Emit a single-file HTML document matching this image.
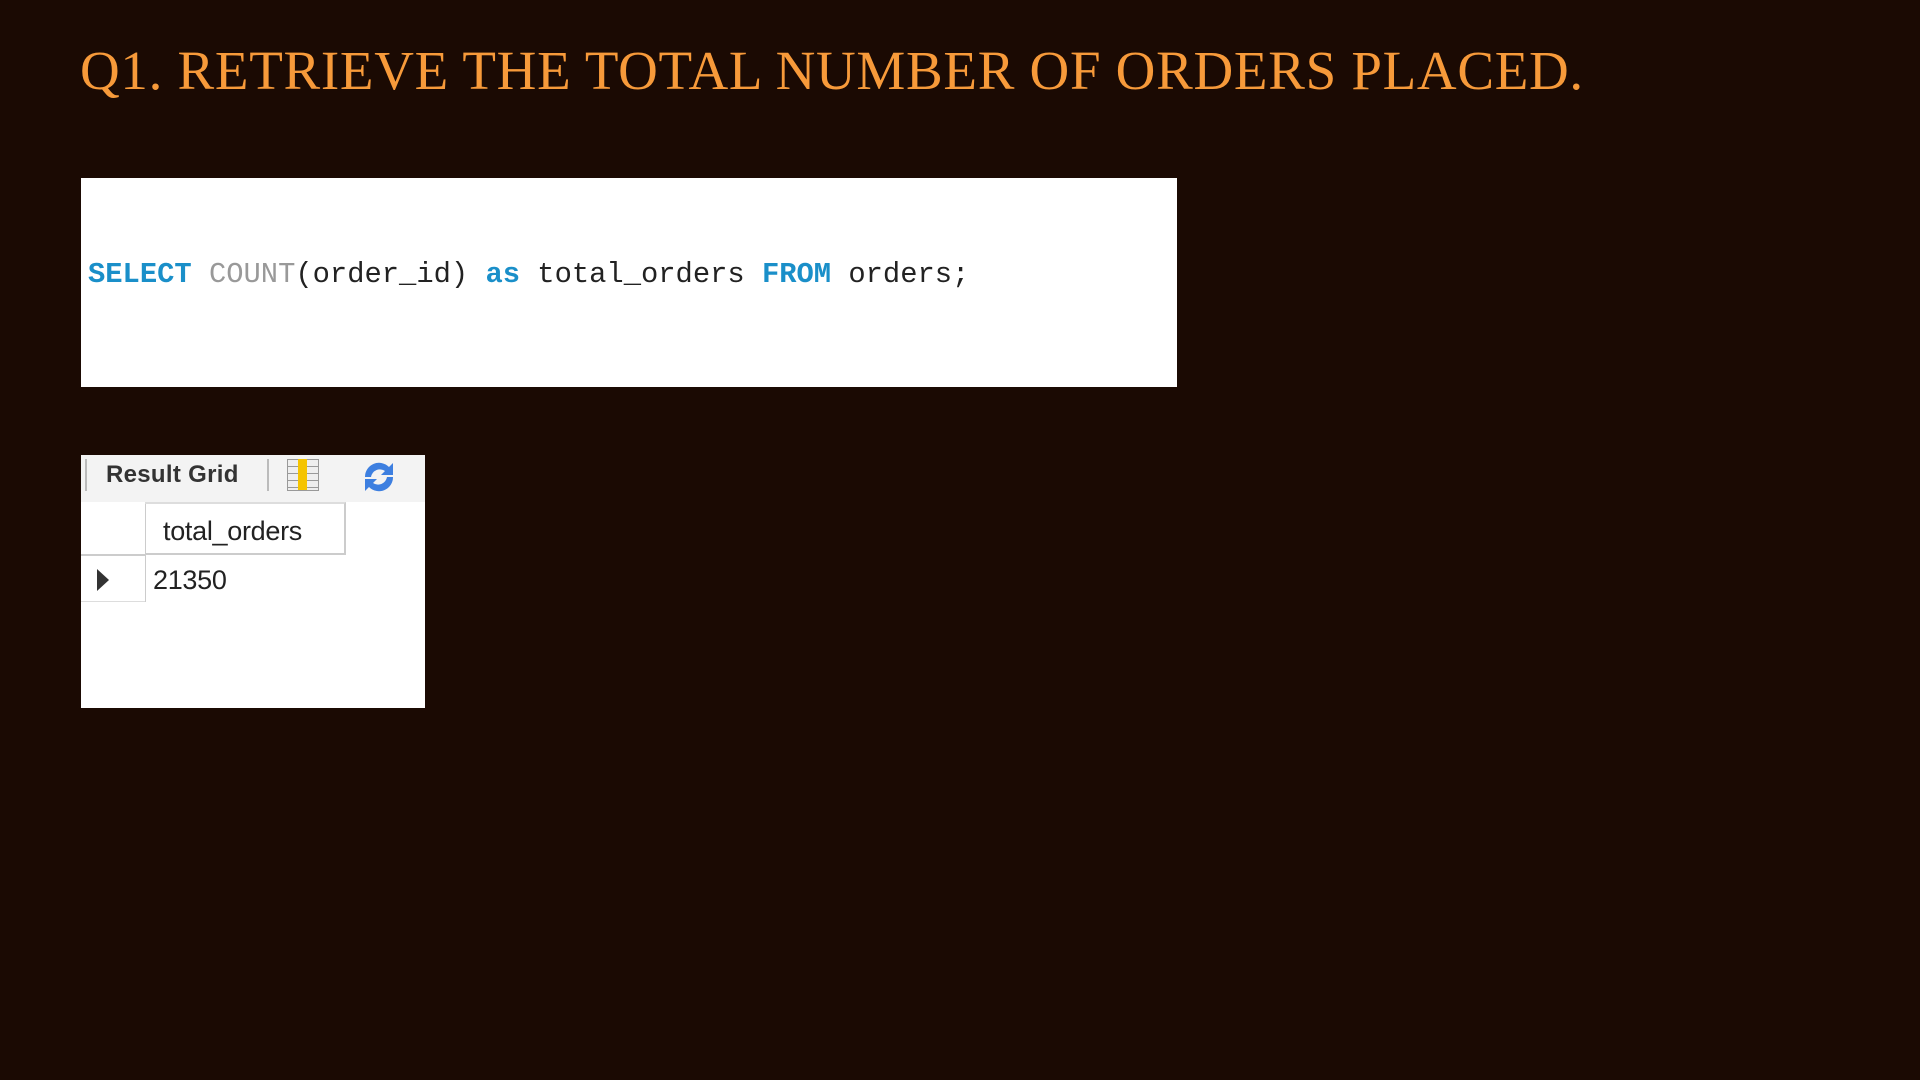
<!DOCTYPE html>
<html><head><style>
body{margin:0;width:1920px;height:1080px;background:#1b0a03;position:relative;overflow:hidden;font-family:"Liberation Sans",sans-serif}
.t{position:absolute;left:80px;top:39px;font-family:"Liberation Serif",serif;font-size:55px;color:#f79a3a;white-space:nowrap;letter-spacing:0.7px}
.code{position:absolute;left:81px;top:178px;width:1096px;height:209px;background:#fff}
.ct{position:absolute;left:88px;top:257px;font-family:"Liberation Mono",monospace;font-size:28.8px;color:#222;white-space:pre;line-height:36px}
.k{color:#1a8fc9;font-weight:bold}.f{color:#999}
.rg{position:absolute;left:81px;top:455px;width:344px;height:253px;background:#fff}
.tb{position:absolute;left:0;top:0;width:344px;height:47px;background:#f3f3f3}
</style></head><body>
<div class="t">Q1. RETRIEVE THE TOTAL NUMBER OF ORDERS PLACED.</div>
<div class="code"></div>
<div class="ct"><span class="k">SELECT</span> <span class="f">COUNT</span>(order_id) <span class="k">as</span> total_orders <span class="k">FROM</span> orders;</div>
<div class="rg">
 <div class="tb">
  <div style="position:absolute;left:4px;top:4px;width:2px;height:32px;background:#bbb"></div>
  <div style="position:absolute;left:25px;top:6px;font-weight:bold;font-size:24px;color:#333;letter-spacing:0.3px">Result Grid</div>
  <div style="position:absolute;left:186px;top:4px;width:2px;height:32px;background:#bbb"></div>
  <div style="position:absolute;left:206px;top:4px;width:30px;height:30px;border:1px solid #999;background:repeating-linear-gradient(#eee 0 6px,#999 6px 7px)"></div>
  <div style="position:absolute;left:217px;top:4px;width:9px;height:31px;background:#f5c400"></div>
  <svg style="position:absolute;left:278px;top:4px" width="40" height="36" viewBox="0 0 40 36"><path d="M6 18 A14 14 0 0 1 30 8 L34 4 L34 16 L22 16 L26 12 A9 9 0 0 0 12 18 Z" fill="#3d7fe0"/><path d="M34 18 A14 14 0 0 1 10 28 L6 32 L6 20 L18 20 L14 24 A9 9 0 0 0 28 18 Z" fill="#3d7fe0"/></svg>
 </div>
 <div style="position:absolute;left:64px;top:47px;width:1px;height:100px;background:#ccc"></div>
 <div style="position:absolute;left:64px;top:47px;width:201px;height:53px;border-right:2px solid #ccc;border-top:2px solid #ddd;border-bottom:2px solid #ccc;box-sizing:border-box"></div>
 <div style="position:absolute;left:0;top:99px;width:64px;height:2px;background:#ccc"></div>
 <div style="position:absolute;left:0;top:146px;width:64px;height:1px;background:#ddd"></div>
 <div style="position:absolute;left:82px;top:61px;font-size:27px;color:#222;letter-spacing:-0.3px">total_orders</div>
 <div style="position:absolute;left:72px;top:110px;font-size:27px;color:#222;letter-spacing:-0.3px">21350</div>
 <div style="position:absolute;left:16px;top:114px;width:0;height:0;border-left:12px solid #333;border-top:11px solid transparent;border-bottom:11px solid transparent"></div>
</div>
</body></html>
